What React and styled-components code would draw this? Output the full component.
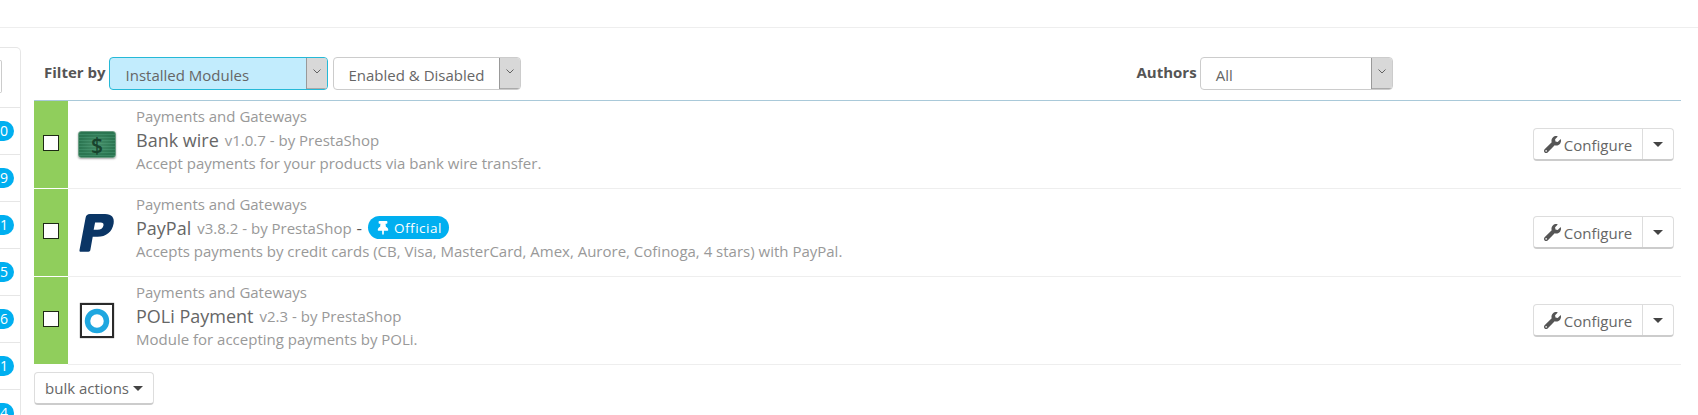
import React from "react";
import styled, { createGlobalStyle } from "styled-components";
import { FaWrench, FaThumbtack } from "react-icons/fa";

const GlobalStyle = createGlobalStyle`
  html, body {
    margin: 0;
    padding: 0;
    background: #fff;
    overflow: hidden;
  }
  body {
    font-family: "Open Sans", "Liberation Sans", sans-serif;
    color: #666;
  }
`;

const Page = styled.div`
  width: 1698px;
  height: 415px;
  overflow: hidden;
`;

const TopBar = styled.div`
  height: 27px;
  border-bottom: 1px solid #eee;
`;

const Content = styled.div`
  display: flex;
  align-items: flex-start;
`;

const Sidebar = styled.div`
  width: 21px;
  height: 400px;
  margin-top: 19px;
  flex: none;
  box-sizing: border-box;
  border: 1px solid #e6e6e6;
  border-left: none;
  border-radius: 0 5px 0 0;
  overflow: hidden;
`;

const SearchBox = styled.div`
  height: 33px;
  width: 2px;
  margin-top: 12px;
  margin-bottom: 14px;
  box-sizing: border-box;
  border: 1px solid #ccc;
  border-left: none;
  border-radius: 0 3px 3px 0;
`;

const SideItem = styled.div`
  height: 47px;
  box-sizing: border-box;
  border-top: 1px solid #e6e6e6;
  padding-right: 6px;
  display: flex;
  align-items: center;
  justify-content: flex-end;
`;

const Count = styled.span`
  flex: none;
  width: 26px;
  height: 20px;
  border-radius: 10px;
  background: #00aff0;
  color: #fff;
  font-size: 14px;
  line-height: 20px;
  text-align: right;
  padding-right: 6px;
  box-sizing: border-box;
`;

const Main = styled.div`
  width: 1647px;
  margin-left: 13px;
  flex: none;
`;

const FilterBar = styled.div`
  height: 72px;
  box-sizing: border-box;
  padding-top: 29px;
  display: flex;
  align-items: flex-start;
`;

const FilterLabel = styled.label`
  font-size: 15px;
  font-weight: 700;
  color: #555;
  line-height: 20px;
  margin: 5px 3px 0 ${(p) => p.$left || 0}px;
`;

const Select = styled.div`
  width: ${(p) => p.$width}px;
  height: 33px;
  margin-right: 5px;
  box-sizing: border-box;
  display: flex;
  border: 1px solid ${(p) => (p.$active ? "#25b9d7" : "#ccc")};
  border-radius: 4px;
  background: ${(p) => (p.$active ? "#c2ecfd" : "#fff")};
  overflow: hidden;
`;

const SelectText = styled.span`
  flex: 1;
  padding: 7px 0 0 ${(p) => p.$pad || 15}px;
  font-size: 15px;
  line-height: 20px;
  color: #666;
`;

const SelectArrow = styled.span`
  width: 20px;
  flex: none;
  display: flex;
  align-items: center;
  justify-content: center;
  background: #d8d8d8;
  border-left: 1px solid #999;
  box-shadow: inset 0 -1px 0 #aaa;
  svg {
    width: 8px;
    height: 5px;
    margin-bottom: 4px;
  }
`;

const Table = styled.div`
  border-top: 1px solid #a9c9d9;
`;

const Row = styled.div`
  display: flex;
  height: 88px;
  box-sizing: border-box;
  border-bottom: 1px solid #eee;
`;

const StatusCell = styled.div`
  width: 34px;
  flex: none;
  background: #90ce5c;
  border-bottom: 1px solid #fff;
  margin-bottom: -1px;
  display: flex;
  align-items: center;
  justify-content: center;
`;

const Checkbox = styled.span`
  width: 16px;
  height: 16px;
  box-sizing: border-box;
  background: #fff;
  border: 1px solid #1d2a14;
  margin-bottom: 3px;
`;

const IconCell = styled.div`
  width: 68px;
  flex: none;
  display: flex;
  align-items: center;
  padding-left: 10px;
  box-sizing: border-box;
  svg {
    display: block;
  }
`;

const BankNote = styled.div`
  width: 38px;
  height: 27px;
  border-radius: 3px;
  background: radial-gradient(ellipse at center, rgba(110, 180, 140, 0.4), rgba(110, 180, 140, 0) 70%),
    repeating-linear-gradient(#2b7551 0 2px, #3a8763 2px 3px);
  border: 1px solid #6a9c82;
  box-sizing: border-box;
  box-shadow: 0 1px 2px rgba(0, 0, 0, 0.35);
  display: flex;
  align-items: center;
  justify-content: center;
  color: #17432d;
  font-size: 21px;
  font-weight: 600;
`;

const PoliBox = styled.div`
  width: 34px;
  height: 35px;
  margin-left: 2px;
  box-sizing: border-box;
  border: 2px solid #2a2a2a;
  display: flex;
  align-items: center;
  justify-content: center;
  box-shadow: 0 0 1px #555;
`;

const Info = styled.div`
  flex: 1;
  padding-top: 5px;
`;

const Category = styled.div`
  font-size: 15px;
  line-height: 20px;
  color: #999;
`;

const Title = styled.div`
  display: flex;
  align-items: center;
  height: 27px;
  font-size: 15px;
  color: #999;
`;

const Name = styled.span`
  font-size: 18px;
  color: #666;
  margin-right: 6px;
`;

const Dash = styled.span`
  color: #555;
  font-size: 17px;
  margin: 0 6px 0 5px;
`;

const Official = styled.span`
  display: inline-flex;
  align-items: center;
  gap: 4px;
  height: 23px;
  padding: 0 7px 0 8px;
  border-radius: 12px;
  background: #00aff0;
  color: #fff;
  font-size: 13.5px;
  letter-spacing: 0.5px;
`;

const Description = styled.div`
  font-size: 15px;
  line-height: 20px;
  color: #999;
`;

const Actions = styled.div`
  width: 148px;
  flex: none;
  padding-top: 27px;
`;

const ButtonGroup = styled.div`
  display: flex;
  width: 141px;
  height: 33px;
  box-sizing: border-box;
  border: 1px solid #ddd;
  border-bottom: 2px solid #ccc;
  border-radius: 4px;
  background: #fff;
`;

const ConfigureButton = styled.div`
  width: 109px;
  flex: none;
  display: flex;
  align-items: center;
  justify-content: center;
  gap: 3px;
  padding-top: 1px;
  box-sizing: border-box;
  font-size: 15px;
  color: #666;
  border-right: 1px solid #ddd;
  svg {
    color: #555;
    width: 17px;
    height: 17px;
  }
`;

const Caret = styled.span`
  display: inline-block;
  width: 0;
  height: 0;
  border-top: 5px solid #444;
  border-left: 5px solid transparent;
  border-right: 5px solid transparent;
`;

const CaretCell = styled.div`
  flex: 1;
  display: flex;
  align-items: center;
  justify-content: center;
`;

const BulkButton = styled.div`
  width: 120px;
  height: 33px;
  margin-top: 7px;
  box-sizing: border-box;
  border: 1px solid #ddd;
  border-bottom: 2px solid #ccc;
  border-radius: 4px;
  display: flex;
  align-items: center;
  justify-content: center;
  gap: 4px;
  font-size: 15px;
  color: #666;
`;

const Chevron = () => (
  <svg viewBox="0 0 8 5" fill="none" stroke="#555" strokeWidth="0.9">
    <path d="M0.5 0.5 L4 4 L7.5 0.5" />
  </svg>
);

const PayPalLogo = () => (
  <svg width="36" height="38" viewBox="0 0 37 40" style={{ marginLeft: 1 }}>
    <path
      fill="#0a3565"
      d="M11 0 H27 C34 0 37 4 36 10 C34.5 19 28 24 19 24 H14 L11.5 38 C11.3 39.3 10.6 39.8 9.5 39.8 H1.5 C0.4 39.8 -0.2 39 0.1 37.8 L6.5 4 C7 1.2 8.6 0 11 0 Z M16.5 9 L15 16.5 H19 C22.5 16.5 24.8 14.8 25.3 12 C25.7 10 24.6 9 22.4 9 Z"
      fillRule="evenodd"
    />
  </svg>
);

const PoliLogo = () => (
  <svg width="26" height="26" viewBox="0 0 26 26">
    <circle cx="13" cy="13" r="9.5" fill="none" stroke="#1ea7e0" strokeWidth="5.5" />
  </svg>
);

const counts = ["0", "9", "1", "5", "6", "1", "4"];

const modules = [
  {
    name: "Bank wire",
    version: "v1.0.7 - by PrestaShop",
    description: "Accept payments for your products via bank wire transfer.",
    icon: <BankNote>$</BankNote>,
  },
  {
    name: "PayPal",
    version: "v3.8.2 - by PrestaShop",
    official: true,
    description:
      "Accepts payments by credit cards (CB, Visa, MasterCard, Amex, Aurore, Cofinoga, 4 stars) with PayPal.",
    icon: <PayPalLogo />,
  },
  {
    name: "POLi Payment",
    version: "v2.3 - by PrestaShop",
    description: "Module for accepting payments by POLi.",
    icon: (
      <PoliBox>
        <PoliLogo />
      </PoliBox>
    ),
  },
];

const Dropdown = ({ width, active, pad, children }) => (
  <Select $width={width} $active={active}>
    <SelectText $pad={pad}>{children}</SelectText>
    <SelectArrow>
      <Chevron />
    </SelectArrow>
  </Select>
);

export default function App() {
  return (
    <Page>
      <GlobalStyle />
      <TopBar />
      <Content>
        <Sidebar>
          <SearchBox />
          {counts.map((c, i) => (
            <SideItem key={i}>
              <Count>{c}</Count>
            </SideItem>
          ))}
        </Sidebar>
        <Main>
          <FilterBar>
            <FilterLabel $left={10}>Filter by</FilterLabel>
            <Dropdown width={219} active pad={16}>
              Installed Modules
            </Dropdown>
            <Dropdown width={188} pad={15}>
              Enabled &amp; Disabled
            </Dropdown>
            <FilterLabel $left={611}>Authors</FilterLabel>
            <Dropdown width={193} pad={15}>
              All
            </Dropdown>
          </FilterBar>
          <Table>
            {modules.map((m) => (
              <Row key={m.name}>
                <StatusCell>
                  <Checkbox />
                </StatusCell>
                <IconCell>{m.icon}</IconCell>
                <Info>
                  <Category>Payments and Gateways</Category>
                  <Title>
                    <Name>{m.name}</Name>
                    {m.version}
                    {m.official && (
                      <>
                        <Dash>-</Dash>
                        <Official>
                          <FaThumbtack size={14} />
                          Official
                        </Official>
                      </>
                    )}
                  </Title>
                  <Description>{m.description}</Description>
                </Info>
                <Actions>
                  <ButtonGroup>
                    <ConfigureButton>
                      <FaWrench />
                      Configure
                    </ConfigureButton>
                    <CaretCell>
                      <Caret />
                    </CaretCell>
                  </ButtonGroup>
                </Actions>
              </Row>
            ))}
          </Table>
          <BulkButton>
            bulk actions
            <Caret />
          </BulkButton>
        </Main>
      </Content>
    </Page>
  );
}
